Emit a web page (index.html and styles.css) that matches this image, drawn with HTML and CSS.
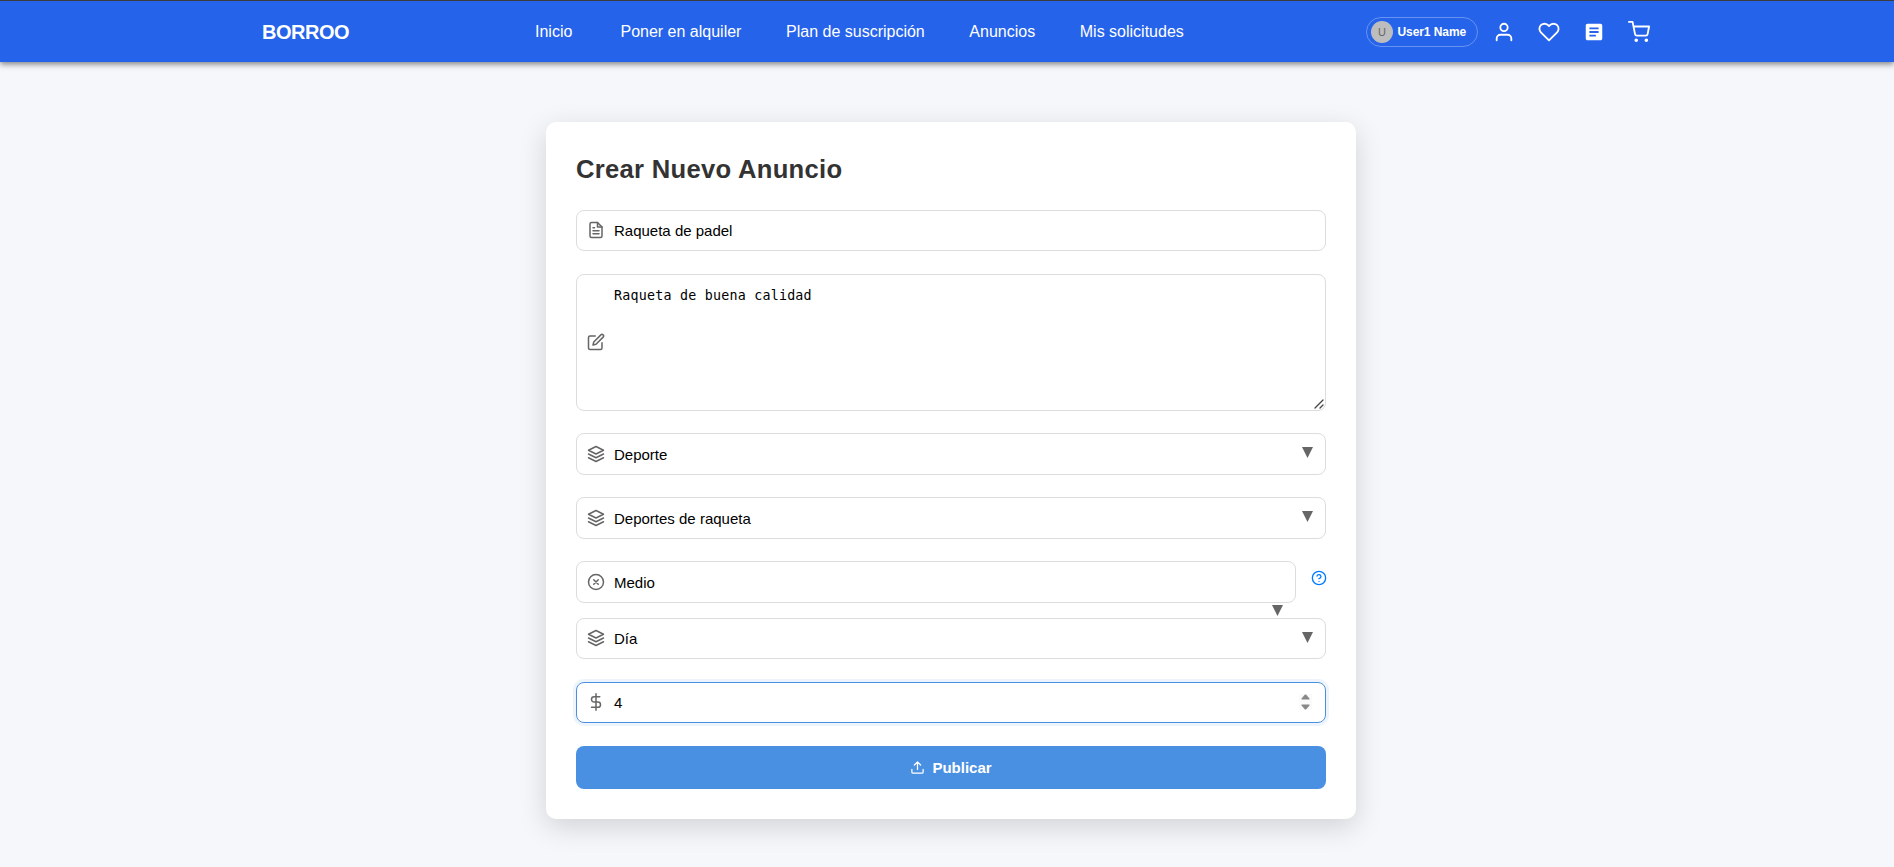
FILE: index.html
```html
<!DOCTYPE html>
<html lang="es">
<head>
<meta charset="utf-8">
<title>Borroo - Crear anuncio</title>
<link rel="stylesheet" href="styles.css">
</head>
<body>
<header class="navbar">
  <a class="brand">BORROO</a>
  <nav class="nav-links">
    <a class="nav-home">Inicio</a><a>Poner en alquiler</a><a>Plan de suscripción</a><a>Anuncios</a><a>Mis solicitudes</a>
  </nav>
  <div class="nav-actions">
    <div class="user-pill"><span class="avatar">U</span><span class="user-name">User1 Name</span></div>
    <svg class="nav-icon" viewBox="0 0 24 24"><path d="M20 21v-2a4 4 0 0 0-4-4H8a4 4 0 0 0-4 4v2"/><circle cx="12" cy="7" r="4"/></svg>
    <svg class="nav-icon" viewBox="0 0 24 24"><path d="M20.84 4.61a5.5 5.5 0 0 0-7.78 0L12 5.67l-1.06-1.06a5.5 5.5 0 0 0-7.78 7.78l1.06 1.06L12 21.23l7.78-7.78 1.06-1.06a5.5 5.5 0 0 0 0-7.78z"/></svg>
    <svg class="nav-icon solid" viewBox="0 0 24 24"><path d="M19 3H5c-1.1 0-2 .9-2 2v14c0 1.100.9 2 2 2h14c1.100 0 2-.9 2-2V5c0-1.100-.9-2-2-2zm-5 14H7v-2h7v2zm3-4H7v-2h10v2zm0-4H7V7h10v2z"/></svg>
    <svg class="nav-icon" viewBox="0 0 24 24"><circle cx="9" cy="21" r="1"/><circle cx="20" cy="21" r="1"/><path d="M1 1h4l2.68 13.39a2 2 0 0 0 2 1.61h9.72a2 2 0 0 0 2-1.61L23 6H6"/></svg>
  </div>
</header>
<main class="card">
  <h1 class="title">Crear Nuevo Anuncio</h1>
  <form class="form">
    <div class="field">
      <svg class="icon" viewBox="0 0 24 24"><path d="M14 2H6a2 2 0 0 0-2 2v16a2 2 0 0 0 2 2h12a2 2 0 0 0 2-2V8z"/><path d="M14 2v6h6M16 13H8M16 17H8M10 9H8"/></svg>
      <span>Raqueta de padel</span>
    </div>
    <div class="field area">
      <svg class="icon" viewBox="0 0 24 24"><path d="M11 4H4a2 2 0 0 0-2 2v14a2 2 0 0 0 2 2h14a2 2 0 0 0 2-2v-7"/><path d="M18.5 2.5a2.121 2.121 0 0 1 3 3L12 15l-4 1 1-4 9.500-9.500z"/></svg>
      <span class="mono">Raqueta de buena calidad</span>
      <svg class="grip" viewBox="0 0 10 10"><path d="M1 9L9 1M6 9L9 6"/></svg>
    </div>
    <div class="field select">
      <svg class="icon" viewBox="0 0 24 24"><path d="M12 2L2 7l10 5 10-5-10-5zM2 17l10 5 10-5M2 12l10 5 10-5"/></svg>
      <span>Deporte</span><i class="arrow"></i>
    </div>
    <div class="field select">
      <svg class="icon" viewBox="0 0 24 24"><path d="M12 2L2 7l10 5 10-5-10-5zM2 17l10 5 10-5M2 12l10 5 10-5"/></svg>
      <span>Deportes de raqueta</span><i class="arrow"></i>
    </div>
    <div class="help-row">
      <div class="field select overflow">
        <svg class="icon" viewBox="0 0 24 24"><circle cx="12" cy="12" r="10"/><path d="M15 9l-6 6M9 9l6 6"/></svg>
        <span>Medio</span><i class="arrow"></i>
      </div>
      <svg class="help" viewBox="0 0 24 24"><circle cx="12" cy="12" r="10"/><path d="M9.09 9a3 3 0 0 1 5.83 1c0 2-3 3-3 3M12 17h.01"/></svg>
    </div>
    <div class="field select short">
      <svg class="icon" viewBox="0 0 24 24"><path d="M12 2L2 7l10 5 10-5-10-5zM2 17l10 5 10-5M2 12l10 5 10-5"/></svg>
      <span>Día</span><i class="arrow"></i>
    </div>
    <div class="field focused">
      <svg class="icon" viewBox="0 0 24 24"><path d="M12 1v22M17 5H9.500a3.500 3.500 0 0 0 0 7h5a3.500 3.500 0 0 1 0 7H6"/></svg>
      <span>4</span>
      <svg class="spinner" viewBox="0 0 13 16"><rect width="13" height="16"/><path d="M2.500 5.500V4.500L6 .5H7L10.500 4.500V5.500zM2.500 10.500V11.500L6 15.500H7L10.500 11.500V10.500z"/></svg>
    </div>
    <button class="submit" type="button">
      <svg viewBox="0 0 24 24"><path d="M21 15v4a2 2 0 0 1-2 2H5a2 2 0 0 1-2-2v-4M17 8l-5-5-5 5M12 3v12"/></svg>
      <span>Publicar</span>
    </button>
  </form>
</main>
</body>
</html>
```

FILE: styles.css
```css
* { box-sizing: border-box; }
body {
  margin: 0;
  height: 867px;
  overflow: hidden;
  background: #f5f7fb;
  font-family: "Liberation Sans", Arial, sans-serif;
  color: #000;
}
svg { fill: none; stroke: currentColor; stroke-width: 2; stroke-linecap: round; stroke-linejoin: round; flex: none; }

.navbar {
  height: 62px;
  padding: 1px 244px 0 262px;
  border-top: 1px solid #3c3c3c;
  background: #2563eb;
  box-shadow: 0 2px 6px rgba(0, 0, 0, .5);
  color: #fff;
  display: flex;
  align-items: center;
}
.brand { width: 273px; font-size: 20px; font-weight: 700; letter-spacing: -.5px; }
.nav-links { display: flex; gap: 44.6px; font-size: 16px; white-space: nowrap; }
.nav-home { margin-right: 3.5px; }
.nav-actions { margin-left: auto; display: flex; align-items: center; gap: 23px; }
.user-pill {
  width: 112px; height: 30px; padding-left: 4px; margin-right: -8px;
  border: 1px solid rgba(255, 255, 255, .3); border-radius: 15px;
  display: flex; align-items: center; gap: 4.5px;
}
.avatar {
  width: 22px; height: 22px; border-radius: 50%;
  background: #bdbdbd; color: #666; font-size: 11px;
  display: flex; align-items: center; justify-content: center;
}
.user-name { font-size: 12px; font-weight: 700; letter-spacing: -.08px; white-space: nowrap; }
.nav-icon { width: 22px; height: 22px; }
.solid { fill: currentColor; stroke: none; }

.card {
  width: 810px; height: 697px; margin: 60px 0 0 546px; padding: 30px;
  background: #fff; border-radius: 10px;
  box-shadow: 0 8px 28px rgba(0, 0, 0, .15);
}
.title { margin: 0; height: 58px; line-height: 35px; font-size: 25.6px; color: #333; letter-spacing: .3px; }
.form { display: flex; flex-direction: column; }
.field {
  position: relative;
  height: 41px; margin-bottom: 23px; padding: 0 11px 0 10px;
  border: 1px solid #ddd; border-radius: 8px;
  display: flex; align-items: center; gap: 9px;
  font-size: 15px;
}
.icon { width: 18px; height: 18px; color: #666; margin-top: -1px; }
.area { height: 137px; margin-bottom: 22px; }
.mono { align-self: flex-start; padding-top: 13px; font: 13.33px/16px "DejaVu Sans Mono", monospace; letter-spacing: .22px; }
.grip { position: absolute; right: 1px; bottom: 1px; width: 10px; height: 10px; stroke: #444; stroke-width: 1.3; }
.select { height: 42px; margin-bottom: 22px; }
.arrow {
  width: 11px; height: 11px; margin: -3px 1px 0 auto;
  background: #666; clip-path: polygon(0 0, 100% 0, 50% 100%);
}
.help-row { display: flex; justify-content: space-between; height: 57px; }
.overflow { width: 720px; }
.overflow .arrow { position: absolute; right: 12px; top: 43px; margin: 0; }
.help { width: 16px; height: 16px; margin: 8.5px -.5px 0 0; color: #007bff; }
.short { height: 41px; margin-bottom: 23px; }
.short .arrow { margin-top: -2px; }
.focused { border-color: #4a90e2; box-shadow: 0 0 0 3px rgba(74, 144, 226, .1); }
.spinner { width: 13px; height: 16px; margin: -2px 2px 0 auto; fill: #888; stroke: none; }
.spinner rect { fill: #fafafa; }
.submit {
  height: 43px; padding: 0; border: 0; border-radius: 8px;
  background: #4a90e2; color: #fff;
  font: 700 15px "Liberation Sans", Arial, sans-serif;
  display: flex; align-items: center; justify-content: center; gap: 7px;
}
.submit svg { width: 15px; height: 15px; }
```
